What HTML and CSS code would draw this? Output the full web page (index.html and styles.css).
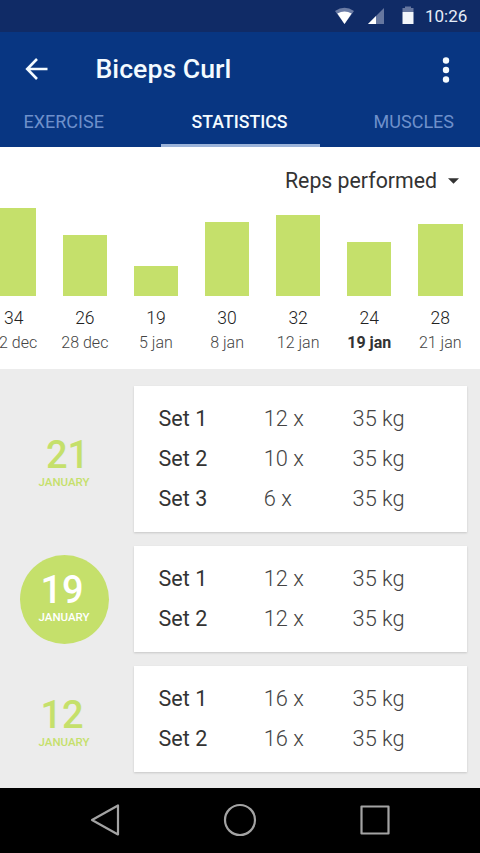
FILE: index.html
```html
<!DOCTYPE html>
<html lang="en">
<head>
<meta charset="utf-8">
<title>Biceps Curl</title>
<link rel="stylesheet" href="styles.css">
</head>
<body>
<div class="status-bar">
  <svg class="status-icons" width="84" height="32" viewBox="0 0 84 32">
    <path d="M0 11Q9.500 4.500 19 11L9.500 24Z" fill="#6b7ca5"/>
    <path d="M2.400 13.500Q9.500 9.500 16.600 13.500L9.500 24Z" fill="#fff"/>
    <path d="M49 8V24H33Z" fill="#66779f"/>
    <path d="M41 16V24H33Z" fill="#fff"/>
    <path d="M67.500 12V8H70V6.500H76V8H78.500V12Z" fill="#66779f"/>
    <path d="M67.500 12H78.500V24H67.500Z" fill="#f2f6fb"/>
  </svg>
  <span class="clock">10:26</span>
</div>
<header class="app-bar">
  <div class="title-row">
    <svg class="back" width="24" height="24" viewBox="0 0 24 24"><path d="M22.500 12H2.500M12 2L2.200 12L12 22" fill="none" stroke="#f4fbff" stroke-width="2.600"/></svg>
    <h1 class="title">Biceps Curl</h1>
    <svg class="more" width="8" height="28" viewBox="0 0 8 28"><g fill="#f4fbff"><circle cx="4" cy="4.500" r="3.200"/><circle cx="4" cy="14" r="3.200"/><circle cx="4" cy="23.500" r="3.200"/></g></svg>
  </div>
  <nav class="tabs">
    <span class="tab tab-first">EXERCISE</span>
    <span class="tab tab-active">STATISTICS</span>
    <span class="tab tab-last">MUSCLES</span>
  </nav>
</header>
<section class="chart">
  <div class="metric"><span class="metric-name">Reps performed</span><svg width="11" height="6" viewBox="0 0 11 6"><path d="M0 .3H11L5.500 5.700Z" fill="#333"/></svg></div>
  <div class="columns">
    <div class="column"><div class="bar" style="height:87.500px"></div><span class="value">34</span><span class="date">22 dec</span></div>
    <div class="column"><div class="bar" style="height:61px"></div><span class="value">26</span><span class="date">28 dec</span></div>
    <div class="column"><div class="bar" style="height:30px"></div><span class="value">19</span><span class="date">5 jan</span></div>
    <div class="column"><div class="bar" style="height:74.300px"></div><span class="value">30</span><span class="date">8 jan</span></div>
    <div class="column"><div class="bar" style="height:80.500px"></div><span class="value">32</span><span class="date">12 jan</span></div>
    <div class="column"><div class="bar" style="height:54px"></div><span class="value">24</span><span class="date date-selected">19 jan</span></div>
    <div class="column"><div class="bar" style="height:71.700px"></div><span class="value">28</span><span class="date">21 jan</span></div>
  </div>
</section>
<main class="log">
  <div class="entry">
    <div class="day"><span class="number number-late">21</span><span class="month">JANUARY</span></div>
    <div class="card">
      <div class="set"><span class="name">Set 1</span><span>12 x</span><span>35 kg</span></div>
      <div class="set"><span class="name">Set 2</span><span>10 x</span><span>35 kg</span></div>
      <div class="set"><span class="name">Set 3</span><span>6 x</span><span>35 kg</span></div>
    </div>
  </div>
  <div class="entry">
    <div class="day day-selected"><span class="number">19</span><span class="month">JANUARY</span></div>
    <div class="card">
      <div class="set"><span class="name">Set 1</span><span>12 x</span><span>35 kg</span></div>
      <div class="set"><span class="name">Set 2</span><span>12 x</span><span>35 kg</span></div>
    </div>
  </div>
  <div class="entry">
    <div class="day"><span class="number">12</span><span class="month">JANUARY</span></div>
    <div class="card">
      <div class="set"><span class="name">Set 1</span><span>16 x</span><span>35 kg</span></div>
      <div class="set"><span class="name">Set 2</span><span>16 x</span><span>35 kg</span></div>
    </div>
  </div>
</main>
<footer class="nav-bar">
  <svg width="30" height="34" viewBox="0 0 30 34"><path d="M28 2.500V31.500L2 17Z" fill="none" stroke="#a3a3a3" stroke-width="2.200" stroke-linejoin="round"/></svg>
  <svg width="34" height="34" viewBox="0 0 34 34"><circle cx="17" cy="17" r="15" fill="none" stroke="#a3a3a3" stroke-width="2.200"/></svg>
  <svg width="30" height="34" viewBox="0 0 30 34"><rect x="1.500" y="3.500" width="27" height="27" fill="none" stroke="#a3a3a3" stroke-width="2.200" stroke-linejoin="round"/></svg>
</footer>
</body>
</html>
```

FILE: styles.css
```css
* { box-sizing: border-box; }

body {
  margin: 0;
  width: 480px;
  height: 853px;
  overflow: hidden;
  display: flex;
  flex-direction: column;
  background: #fff;
  font-family: Roboto, sans-serif;
}

svg { display: block; flex: none; }

.status-bar {
  height: 32px;
  background: #102b66;
  display: flex;
  align-items: center;
  padding-left: 334.500px;
}

.clock {
  margin-left: 6.500px;
  color: #e6edf8;
  font-size: 17px;
  line-height: 32px;
}

.app-bar {
  height: 114.500px;
  background: #083682;
}

.title-row {
  height: 74px;
  display: flex;
  align-items: center;
  padding: 0 30.500px 0 24.500px;
}

.title {
  margin: 0 auto 0 47px;
  color: #f4fbff;
  font-size: 26.700px;
  font-weight: 500;
  line-height: 32px;
}

.more { margin-top: 2px; }

.tabs {
  display: grid;
  grid-template-columns: 161px 159px 160px;
}

.tab {
  height: 40.500px;
  line-height: 32px;
  font-size: 18px;
  color: #6e90cb;
}

.tab-first { padding-left: 23.500px; }

.tab-last { text-align: right; padding-right: 26px; }

.tab-active {
  text-align: center;
  font-size: 17.700px;
  font-weight: 500;
  color: #f4fbff;
  border-bottom: 3.500px solid #9bb3d9;
  padding-right: 2px;
}

.chart {
  height: 222px;
  overflow: hidden;
}

.metric {
  height: 50px;
  padding: 19px 21px 0 0;
  display: flex;
  align-items: center;
  justify-content: flex-end;
  gap: 11px;
  color: #333;
}

.metric-name { font-size: 21.300px; line-height: 30px; }

.columns {
  display: flex;
  height: 158.300px;
  margin: 0 0 0 -21.800px;
}

.column {
  flex: 0 0 71.100px;
  display: flex;
  flex-direction: column;
  align-items: center;
}

.bar {
  width: 44.500px;
  margin-top: auto;
  margin-bottom: 10px;
  background: #c5e06b;
}

.value {
  font-size: 17.500px;
  font-weight: 300;
  line-height: 24px;
  color: #222;
}

.date {
  font-size: 16px;
  font-weight: 300;
  line-height: 25px;
  color: #444;
  white-space: nowrap;
}

.date-selected { font-weight: 700; color: #333; }

.log {
  flex: 1;
  background: #ececec;
  display: flex;
  flex-direction: column;
  gap: 14px;
  padding: 17.500px 13.500px 0 19.600px;
}

.entry {
  display: flex;
  align-items: center;
  gap: 25px;
}

.day {
  width: 89px;
  height: 89px;
  padding-top: 12px;
  display: flex;
  flex-direction: column;
  align-items: center;
  justify-content: center;
  color: #c5e06b;
}

.day-selected {
  padding-top: 2px;
  border-radius: 50%;
  background: #c5e06b;
  color: #fff;
}

.number {
  font-size: 38px;
  font-weight: 500;
  line-height: 34px;
  margin: 1px 4px -1px 0;
}

.number-late { margin: 1px 0 -1px 7px; }

.month {
  font-size: 11.500px;
  font-weight: 500;
  line-height: 22px;
}

.card {
  flex: 1;
  padding: 12.500px 0 13.500px 25px;
  background: #fff;
  box-shadow: 0 1px 2px rgba(0, 0, 0, .16);
}

.set {
  display: grid;
  grid-template-columns: 105.200px 88.800px auto;
  font-size: 21.800px;
  font-weight: 300;
  line-height: 40px;
  color: #444;
}

.name { font-size: 21.500px; font-weight: 400; color: #333; }

.nav-bar {
  height: 65.500px;
  background: #000;
  display: flex;
  align-items: center;
  justify-content: space-between;
  padding: 0 90.500px 0 90px;
}
```
